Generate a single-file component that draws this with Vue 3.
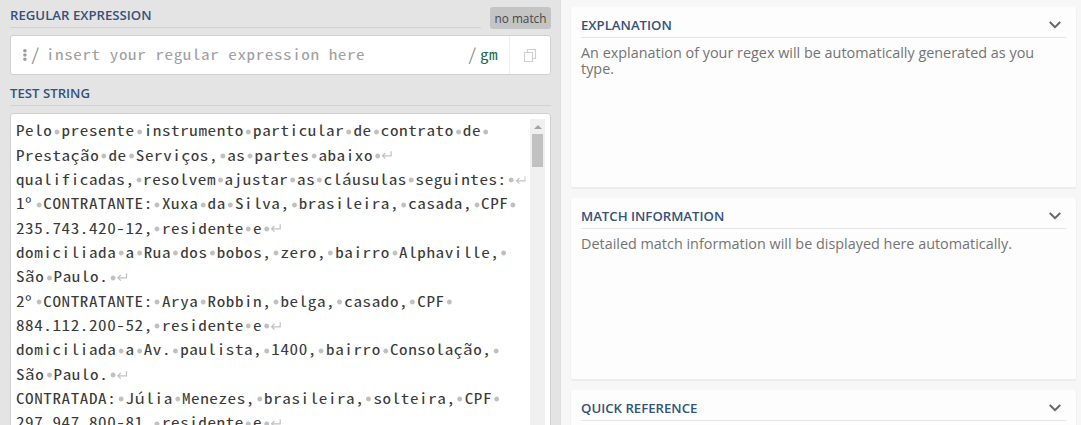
<script setup>
const lines = [
  'Pelo presente instrumento particular de contrato de ',
  'Prestação de Serviços, as partes abaixo ↵',
  'qualificadas, resolvem ajustar as cláusulas seguintes: ↵',
  '1º CONTRATANTE: Xuxa da Silva, brasileira, casada, CPF ',
  '235.743.420-12, residente e ↵',
  'domiciliada a Rua dos bobos, zero, bairro Alphaville, ',
  'São Paulo. ↵',
  '2º CONTRATANTE: Arya Robbin, belga, casado, CPF ',
  '884.112.200-52, residente e ↵',
  'domiciliada a Av. paulista, 1400, bairro Consolação, ',
  'São Paulo. ↵',
  'CONTRATADA: Júlia Menezes, brasileira, solteira, CPF ',
  '297.947.800-81, residente e ↵'
].map((line) => line.split(/([ ↵º])/).filter(Boolean))

const cards = [
  { title: 'EXPLANATION', text: 'An explanation of your regex will be automatically generated as you type.' },
  { title: 'MATCH INFORMATION', text: 'Detailed match information will be displayed here automatically.' },
  { title: 'QUICK REFERENCE', text: '' }
]
</script>

<template>
  <div class="app">
    <main class="editor">
      <header class="regex-head">
        <h2 class="title">REGULAR EXPRESSION</h2>
        <span class="badge">no match</span>
      </header>
      <div class="regex-box">
        <svg class="dots" width="4" height="12" viewBox="0 0 4 12">
          <rect x="0.3" y="0.3" width="3.2" height="3" rx="1" />
          <rect x="0.3" y="4.5" width="3.2" height="3" rx="1" />
          <rect x="0.3" y="8.7" width="3.2" height="3" rx="1" />
        </svg>
        <span class="slash open">/</span>
        <span class="placeholder"><span class="mono">insert your regular expression here</span></span>
        <span class="slash">/</span>
        <span class="flags"><span class="mono">gm</span></span>
        <button class="copy">
          <svg width="14" height="15" viewBox="0 0 14 15">
            <path d="M1.5 4.5H9.5V13.5H1.5ZM4.5 4.5V1.5H12.5V10.5H9.5" />
          </svg>
        </button>
      </div>
      <h2 class="title test-head">TEST STRING</h2>
      <section class="test-box">
        <div class="code">
          <div class="mono">
            <div v-for="(line, i) in lines" :key="i" class="line">
              <template v-for="(part, j) in line" :key="j">
                <span v-if="part === ' '" class="space">&nbsp;</span>
                <svg v-else-if="part === '↵'" class="enter" width="9.7" height="9" viewBox="0 0 11 9" preserveAspectRatio="none">
                  <path d="M9.8 0.3V4.8H1.5M4.2 2L1.3 4.8L4.2 7.6" />
                </svg>
                <span v-else :class="{ ordinal: part === 'º' }">{{ part }}</span>
              </template>
            </div>
          </div>
        </div>
        <div class="scrollbar">
          <i class="arrow"></i>
          <i class="thumb"></i>
        </div>
      </section>
    </main>
    <aside class="side">
      <section v-for="card in cards" :key="card.title" class="card">
        <header class="card-head">
          <h2 class="title">{{ card.title }}</h2>
          <svg width="12" height="8" viewBox="0 0 12 8"><path d="M0.8 1L6 6.2L11.2 1" /></svg>
        </header>
        <p>{{ card.text }}</p>
      </section>
    </aside>
  </div>
</template>

<style>
html, body { overflow: hidden; }
</style>

<style scoped>
* { box-sizing: border-box; }
.app {
  display: flex;
  width: 1081px;
  height: 425px;
  overflow: hidden;
  font-family: "Open Sans", sans-serif;
  background: #f7f7f7;
}
.editor {
  width: 560px;
  padding: 0 9px 0 10px;
  background: #e4e4e4;
  flex: none;
}
.title {
  margin: 0;
  font-size: 13.2px;
  font-weight: 600;
  line-height: 18px;
  color: #34527a;
  white-space: nowrap;
}
.regex-head { display: flex; height: 35px; }
.regex-head .title {
  width: 472px;
  height: 28px;
  padding-top: 6px;
  border-bottom: 1px solid #d2d2d2;
  flex: none;
}
.badge {
  width: 61px;
  height: 22px;
  margin: 7px 0 0 8px;
  border-radius: 3px;
  background: #c4c4c4;
  color: #484848;
  font-size: 11.8px;
  line-height: 22px;
  text-align: center;
  white-space: nowrap;
  flex: none;
}
.regex-head .title { width: 471px; margin-right: 1px; }
.regex-box {
  display: flex;
  align-items: center;
  height: 40px;
  border: 1px solid #d0d0d0;
  border-radius: 3px;
  background: #fff;
  padding-left: 12px;
}
.regex-box, .code {
  font-family: "Noto Sans Mono CJK JP", "Noto Sans Mono CJK SC", "Liberation Mono", monospace;
  font-size: 14.8px;
  white-space: pre;
}
.mono {
  display: inline-block;
  letter-spacing: 0.493px;
  transform: scaleX(1.1555);
  transform-origin: 0 0;
}
.dots { fill: #999; margin-top: -1px; }
.slash { color: #8b8b8b; width: 9px; font-size: 17px; margin-top: -3px; }
.slash.open { margin: -3px 6px 0 4px; }
.placeholder { flex: 1; color: #a0a0a0; margin-top: -3px; }
.flags { width: 18px; margin: -3px 11px 0 3px; color: #1c6b4a; }
.copy {
  display: flex;
  align-items: center;
  justify-content: center;
  width: 41px;
  height: 38px;
  padding: 0;
  border: 0;
  border-left: 1px solid #eee;
  background: none;
}
.copy path { fill: none; stroke: #d0d0d0; stroke-width: 1.2; }
.test-head {
  height: 31px;
  margin-bottom: 7px;
  padding-top: 9px;
  border-bottom: 1px solid #d2d2d2;
}
.test-box {
  display: flex;
  justify-content: space-between;
  height: 320px;
  padding: 5px 5px 0;
  border: 1px solid #d0d0d0;
  border-radius: 3px;
  background: #fff;
  overflow: hidden;
}
.code { width: 514px; color: #3a3a3a; }
.code .mono { display: block; width: 440px; padding-top: 0.4px; }
.line { display: flex; align-items: center; height: 24.35px; line-height: 20px; }
.line > span:not(.space) { margin-top: -2.6px; }
.ordinal { width: 7.893px; font-size: 13px; }
.space {
  width: 7.893px;
  letter-spacing: 0;
  background: radial-gradient(ellipse 2.5px 2.9px at 50% 50%, #c0c0c0 68%, transparent 100%);
}
.enter { flex: none; fill: none; stroke: #c2c2c2; stroke-width: 1.2; margin-left: -0.5px; }
.scrollbar {
  display: flex;
  flex-direction: column;
  align-items: center;
  width: 15px;
  flex: none;
  background: #f0f0f0;
}
.arrow {
  margin-top: 6px;
  border: 4px solid transparent;
  border-top: 0;
  border-bottom: 4px solid #a3a3a3;
}
.thumb { width: 11px; height: 33px; margin-top: 5px; background: #c1c1c1; }
.side {
  display: flex;
  flex-direction: column;
  gap: 9px;
  flex: 1;
  padding: 7px 4px 0 9px;
  border-left: 1px solid #e0e0e0;
}
.card {
  flex: none;
  height: 183px;
  padding: 0 10px;
  border: 1px solid #f2f2f2;
  border-top-color: #fcfcfc;
  border-bottom: 2px solid #ececec;
  border-radius: 4px;
  background: #fdfdfd;
}
.card:first-child { height: 182px; }
.card-head {
  display: flex;
  justify-content: space-between;
  align-items: center;
  height: 30px;
  padding: 4px 5px 0 0;
  border-bottom: 1px solid #e4e4e4;
}
.card-head path { fill: none; stroke: #666; stroke-width: 2; }
.card p { margin: 7px 0 0; font-size: 14.4px; line-height: 16px; color: #747474; }
</style>
